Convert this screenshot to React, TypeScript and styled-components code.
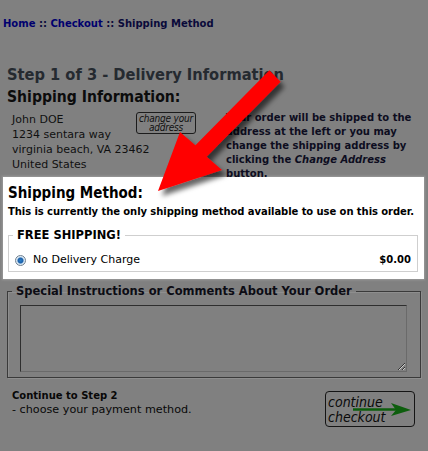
import styled, { createGlobalStyle } from 'styled-components';

const GlobalStyle = createGlobalStyle`
  html, body {
    margin: 0;
    padding: 0;
    background: #808080;
  }
  body {
    font-family: "DejaVu Sans", Verdana, sans-serif;
    color: #101010;
  }
`;

const Page = styled.div`
  position: relative;
  width: 428px;
  height: 451px;
  overflow: hidden;
`;

const Breadcrumb = styled.div`
  padding: 17px 0 0 3px;
  font-size: 10px;
  font-weight: bold;
  line-height: 14px;
  color: #0a0a3a;

  a {
    color: #00006e;
    text-decoration: none;
  }
`;

const StepTitle = styled.h1`
  margin: 34px 0 0 7px;
  font-family: "DejaVu Sans Condensed", Tahoma, sans-serif;
  font-size: 16.3px;
  line-height: 20px;
  color: #252a30;
`;

const SectionTitle = styled.h2`
  margin: 3px 0 0 7px;
  font-family: "DejaVu Sans Condensed", Tahoma, sans-serif;
  font-size: 15.6px;
  line-height: 19px;
  color: #0c0c0c;
`;

const InfoRow = styled.div`
  display: flex;
  margin-top: 5px;
`;

const Address = styled.div`
  width: 124px;
  padding-left: 12px;
  font-size: 11px;
  line-height: 15px;
  white-space: nowrap;
`;

const ChangeButton = styled.button`
  flex: none;
  width: 60px;
  height: 22px;
  padding: 0;
  border: 1px solid #1c1c1c;
  border-radius: 3px;
  background: transparent;
  font-family: "DejaVu Sans Condensed", Tahoma, sans-serif;
  font-style: italic;
  font-size: 10px;
  line-height: 9.5px;
  letter-spacing: -0.2px;
  color: #101010;
`;

const Notice = styled.p`
  margin: -1px 0 0 30px;
  width: 200px;
  font-size: 10px;
  font-weight: bold;
  line-height: 14px;
  color: #0d0d20;
`;

const Highlight = styled.section`
  margin: -4px 4px 0 3px;
  padding: 6px 6px 7px 5px;
  background: #ffffff;
  box-shadow: 0 0 2px 1px #9a9a9a;
`;

const MethodTitle = styled.h2`
  margin: 0;
  font-family: "DejaVu Sans Condensed", Tahoma, sans-serif;
  font-size: 15px;
  line-height: 20px;
  color: #000;
`;

const MethodNote = styled.p`
  margin: 1px 0 9px;
  font-size: 10px;
  font-weight: bold;
  letter-spacing: -0.07px;
  white-space: nowrap;
  line-height: 15px;
  color: #000;
`;

const Box = styled.fieldset<{ $dark?: boolean }>`
  margin: 0;
  min-width: 0;
  padding: ${(p) => (p.$dark ? '7px 13px 5px 12px' : '10px 6px 3px 4px')};
  border: 1px solid ${(p) => (p.$dark ? '#3a3a3a' : '#cfcfcf')};
  box-shadow: ${(p) => (p.$dark ? 'inset 1px 1px 0 #8e8e8e, 1px 1px 0 #8e8e8e' : 'none')};

  legend {
    margin-left: ${(p) => (p.$dark ? '-8px' : '0')};
    padding: 0 4px;
    font-weight: bold;
    font-size: 11.5px;
    line-height: 14px;
    color: ${(p) => (p.$dark ? '#0c0c14' : '#000')};
  }
`;

const OptionRow = styled.label`
  display: flex;
  align-items: center;
  font-size: 11px;
  line-height: 16px;
  color: #000;

  strong {
    margin-left: auto;
    font-size: 10px;
  }
`;

const Radio = styled.span`
  width: 11px;
  height: 11px;
  margin: 0 7px 0 2px;
  border-radius: 50%;
  box-sizing: border-box;
  border: 1px solid #6f7f8f;
  background: radial-gradient(circle, #2a7fc8 0, #1c5fa8 2.5px, #cfe3f3 3.5px, #eef3f8 5px);
`;

const Instructions = styled.div`
  margin: 5px 7px 0 7px;
`;

const Comments = styled.textarea`
  display: block;
  width: 100%;
  height: 67px;
  box-sizing: border-box;
  background: #808080;
  border: 1px solid #6a6a6a;
  border-top-color: #2e2e2e;
  border-left-color: #2e2e2e;
  resize: vertical;
`;

const Footer = styled.div`
  display: flex;
  justify-content: space-between;
  align-items: flex-start;
  margin: 11px 13px 0 12px;
`;

const NextStep = styled.div`
  font-size: 11.2px;
  line-height: 14px;
  color: #080808;

  strong {
    display: block;
    font-size: 10px;
  }
`;

const ContinueButton = styled.button`
  position: relative;
  width: 90px;
  height: 36px;
  margin-top: 2px;
  padding: 2px 0 0 2px;
  border: 1px solid #151515;
  border-radius: 4px;
  background: transparent;
  text-align: left;
  font-family: "DejaVu Sans Condensed", Tahoma, sans-serif;
  font-style: italic;
  font-size: 14px;
  line-height: 15px;
  color: #0a0a0a;

  svg {
    position: absolute;
    left: 27px;
    top: 10px;
  }
`;

const ArrowOverlay = styled.svg`
  position: absolute;
  left: 0;
  top: 0;
  pointer-events: none;
`;

export default function App() {
  return (
    <Page>
      <GlobalStyle />
      <Breadcrumb>
        <a href="#">Home</a> :: <a href="#">Checkout</a> :: Shipping Method
      </Breadcrumb>

      <StepTitle>Step 1 of 3 - Delivery Information</StepTitle>
      <SectionTitle>Shipping Information:</SectionTitle>

      <InfoRow>
        <Address>
          John DOE
          <br />
          1234 sentara way
          <br />
          virginia beach, VA 23462
          <br />
          United States
        </Address>
        <ChangeButton type="button">
          change your
          <br />
          address
        </ChangeButton>
        <Notice>
          Your order will be shipped to the address at the left or you may change the
          shipping address by clicking the <i>Change Address</i> button.
        </Notice>
      </InfoRow>

      <Highlight>
        <MethodTitle>Shipping Method:</MethodTitle>
        <MethodNote>This is currently the only shipping method available to use on this order.</MethodNote>
        <Box>
          <legend>FREE SHIPPING!</legend>
          <OptionRow>
            <Radio />
            No Delivery Charge
            <strong>$0.00</strong>
          </OptionRow>
        </Box>
      </Highlight>

      <Instructions>
        <Box $dark>
          <legend>Special Instructions or Comments About Your Order</legend>
          <Comments />
        </Box>
      </Instructions>

      <Footer>
        <NextStep>
          <strong>Continue to Step 2</strong>- choose your payment method.
        </NextStep>
        <ContinueButton type="button">
          continue
          <br />
          checkout
          <svg width="60" height="16" viewBox="0 0 60 16">
            <path d="M0 7.5 H44" stroke="#0d5e0d" strokeWidth="2.4" />
            <path d="M38 1 L58 8 L38 14 L43 8 Z" fill="#0d5e0d" />
          </svg>
        </ContinueButton>
      </Footer>

      <ArrowOverlay width="428" height="451" viewBox="0 0 428 451">
        <defs>
          <filter id="arrowShadow" x="-20%" y="-20%" width="140%" height="140%">
            <feDropShadow dx="4" dy="5" stdDeviation="2.5" floodColor="#000" floodOpacity="0.6" />
          </filter>
        </defs>
        <polygon
          points="269.4,70.3 280.6,81.7 206.6,156.7 222,170 158,191 180,132 195.4,145.3"
          fill="#ff0000"
          filter="url(#arrowShadow)"
        />
      </ArrowOverlay>
    </Page>
  );
}
